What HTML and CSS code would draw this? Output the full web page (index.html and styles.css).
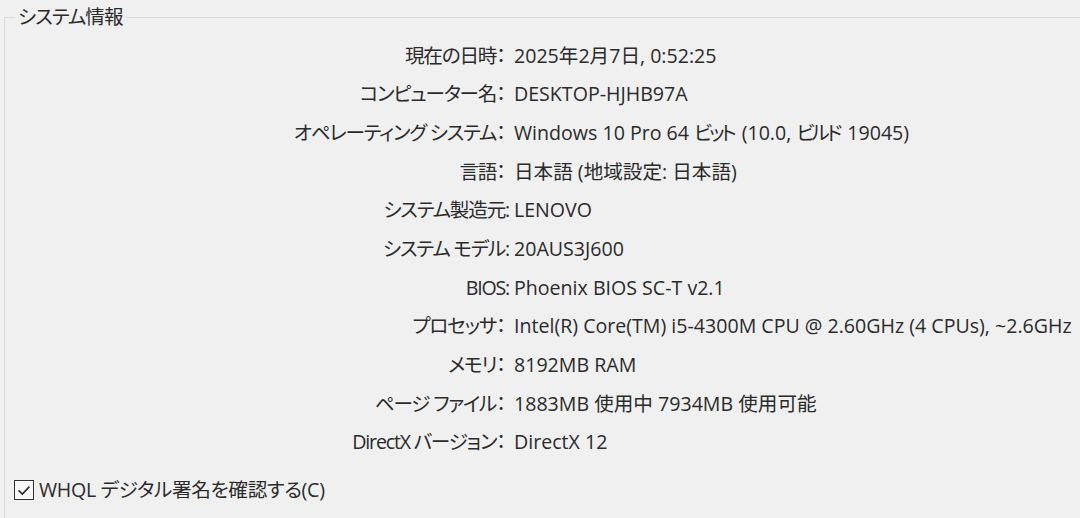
FILE: index.html
```html
<!DOCTYPE html>
<html lang="ja">
<head>
<meta charset="utf-8">
<title>システム情報</title>
<link rel="stylesheet" href="styles.css">
</head>
<body>
<fieldset class="group">
  <legend class="group-title">システム情報</legend>
  <dl class="info">
    <dt>現在の日時<span class="fw">：</span></dt><dd>2025年2月7日, 0:52:25</dd>
    <dt>コンピューター名<span class="fw">：</span></dt><dd>DESKTOP-HJHB97A</dd>
    <dt>オペレーティング システム<span class="fw">：</span></dt><dd>Windows 10 Pro 64 <span class="kana">ビット</span> (10.0, <span class="kana">ビルド</span> 19045)</dd>
    <dt>言語<span class="fw">：</span></dt><dd>日本語 (地域設定: 日本語)</dd>
    <dt>システム製造元:</dt><dd>LENOVO</dd>
    <dt>システム モデル:</dt><dd>20AUS3J600</dd>
    <dt>BIOS:</dt><dd>Phoenix BIOS SC-T v2.1</dd>
    <dt>プロセッサ<span class="fw">：</span></dt><dd>Intel(R) Core(TM) i5-4300M CPU @ 2.60GHz (4 CPUs), ~2.6GHz</dd>
    <dt>メモリ<span class="fw">：</span></dt><dd>8192MB RAM</dd>
    <dt>ページ ファイル<span class="fw">：</span></dt><dd>1883MB 使用中 7934MB 使用可能</dd>
    <dt>DirectX バージョン<span class="fw">：</span></dt><dd>DirectX 12</dd>
  </dl>
  <label class="check">
    <span class="check-box"><svg viewBox="0 0 20 20" width="20" height="20"><path d="M4 10.5 L8.2 14.5 L16 6.2" fill="none" stroke="#2a2a2a" stroke-width="1.8"/></svg></span>
    <span class="check-label">WHQL デジタル署名を確認する(C)</span>
  </label>
</fieldset>
</body>
</html>
```

FILE: styles.css
```css
html, body {
  margin: 0;
  padding: 0;
  background: #f0f0f0;
}
body {
  width: 1080px;
  height: 518px;
  overflow: hidden;
  font-family: "Open Sans", "Noto Sans CJK JP", sans-serif;
  font-feature-settings: "palt";
  font-size: 19.6px;
  color: #2b2b2b;
}
.group {
  margin: 7px 0 0 4px;
  padding: 0 0 40px 0;
  border: none;
  border-top: 1px solid #dadada;
  border-left: 1px solid #dadada;
  min-height: 520px;
  box-sizing: border-box;
}
.group-title {
  margin-left: 10px;
  padding: 0 3px;
  line-height: 20px;
  font-size: 19.6px;
  letter-spacing: -1px;
}
.info {
  display: grid;
  grid-template-columns: 504px auto;
  column-gap: 5px;
  margin: 9.6px 0 0 0;
}
.info dt, .info dd {
  margin: 0;
  line-height: 38.7px;
  height: 38.7px;
  white-space: nowrap;
}
.info dt {
  text-align: right;
  letter-spacing: -1.2px;
}
.fw {
  margin-right: 3px;
  letter-spacing: 0;
}
.kana {
  letter-spacing: -3px;
  margin-right: 3px;
}
.check {
  display: flex;
  align-items: center;
  gap: 5px;
  margin: 17px 0 0 9px;
  height: 22px;
}
.check-box {
  width: 18px;
  height: 18px;
  border: 1.5px solid #333;
  background: #f7f7f7;
  display: flex;
  align-items: center;
  justify-content: center;
}
.check-box svg {
  display: block;
}
.check-label {
  line-height: 22px;
  letter-spacing: -0.3px;
}
```
